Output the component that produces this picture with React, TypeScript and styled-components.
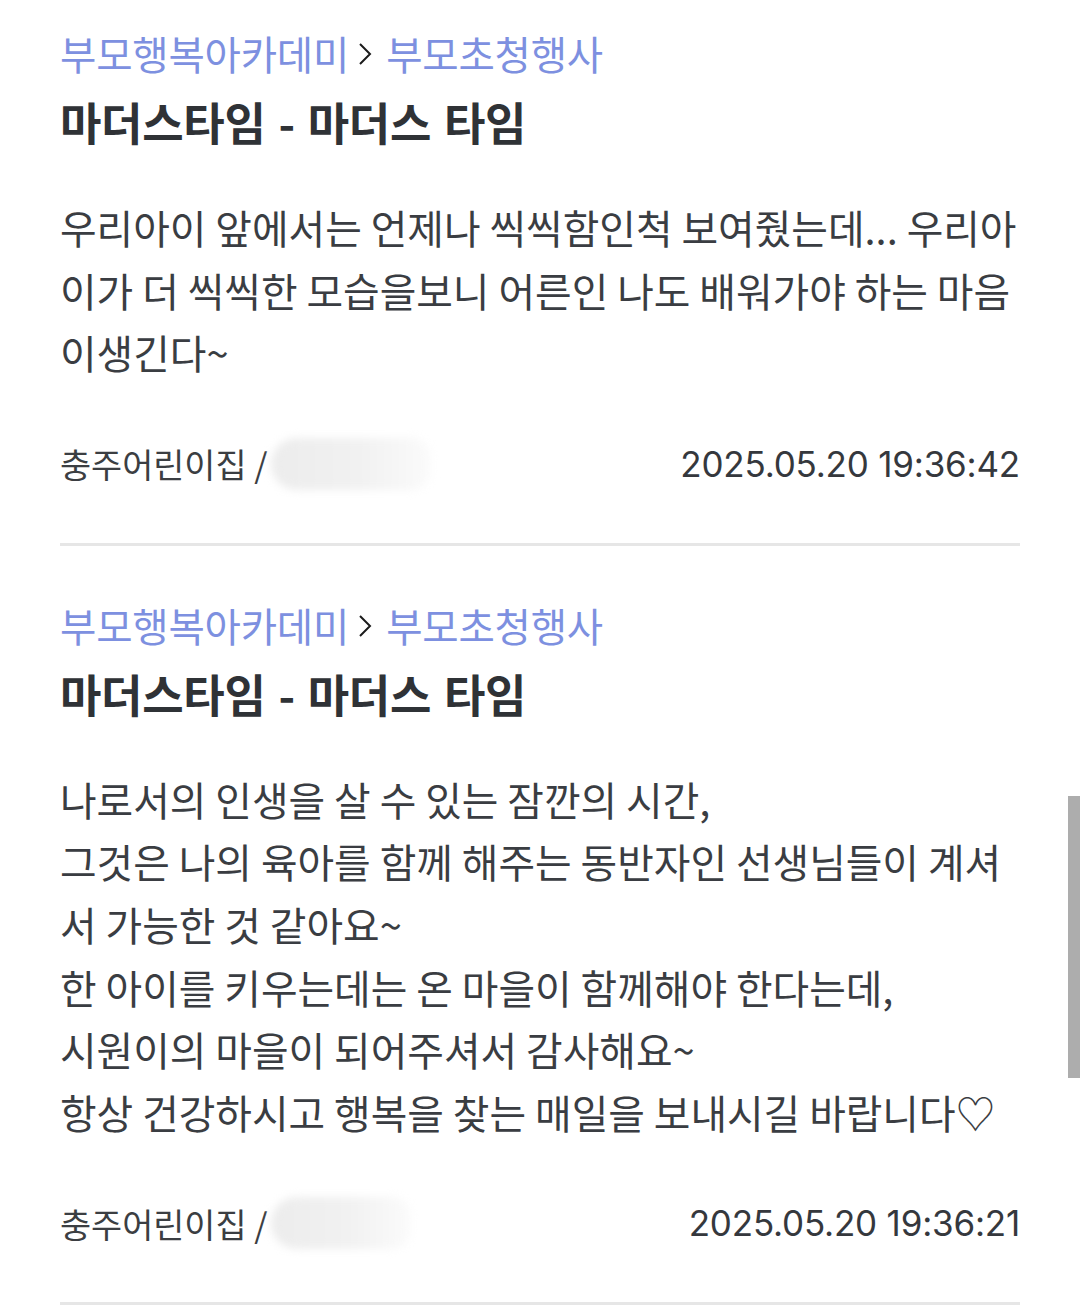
import React from 'react'
import styled, { createGlobalStyle } from 'styled-components'

const GlobalStyle = createGlobalStyle`
   html, body {
      margin: 0;
      padding: 0;
      background: #ffffff;
   }
   body {
      font-family: 'Noto Sans CJK KR', 'Noto Sans', sans-serif;
      color: #35383d;
      overflow: hidden;
   }
`

type Review = {
   category: string
   sub: string
   title: string
   lines: string[]
   author: string
   date: string
   smudge: number
}

const reviews: Review[] = [
   {
      category: '부모행복아카데미',
      sub: '부모초청행사',
      title: '마더스타임 - 마더스 타임',
      lines: [
         '우리아이 앞에서는 언제나 씩씩함인척 보여줬는데... 우리아',
         '이가 더 씩씩한 모습을보니 어른인 나도 배워가야 하는 마음',
         '이생긴다~',
      ],
      author: '충주어린이집 /',
      date: '2025.05.20 19:36:42',
      smudge: 160,
   },
   {
      category: '부모행복아카데미',
      sub: '부모초청행사',
      title: '마더스타임 - 마더스 타임',
      lines: [
         '나로서의 인생을 살 수 있는 잠깐의 시간,',
         '그것은 나의 육아를 함께 해주는 동반자인 선생님들이 계셔',
         '서 가능한 것 같아요~',
         '한 아이를 키우는데는 온 마을이 함께해야 한다는데,',
         '시원이의 마을이 되어주셔서 감사해요~',
         '항상 건강하시고 행복을 찾는 매일을 보내시길 바랍니다♡',
      ],
      author: '충주어린이집 /',
      date: '2025.05.20 19:36:21',
      smudge: 140,
   },
]

export default function App() {
   return (
      <>
         <GlobalStyle />
         <Page>
            {reviews.map((r, i) => (
               <ReviewItem key={i} review={r} />
            ))}
         </Page>
         <ScrollThumb />
      </>
   )
}

const ReviewItem = ({ review }: { review: Review }) => {
   return (
      <Item>
         <Breadcrumb>
            <Crumb>{review.category}</Crumb>
            <Chevron viewBox="0 0 14 24" width={14} height={24}>
               <polyline points="2,2 12,12 2,22" fill="none" stroke="#1b1b1b" strokeWidth={2} />
            </Chevron>
            <Crumb>{review.sub}</Crumb>
         </Breadcrumb>
         <Title>{review.title}</Title>
         <Body>
            {review.lines.map((l, i) => (
               <Line key={i}>{l}</Line>
            ))}
         </Body>
         <Footer>
            <Author>
               {review.author}
               <Smudge style={{ width: review.smudge }} />
            </Author>
            <DateText>{review.date}</DateText>
         </Footer>
      </Item>
   )
}

const Page = styled.main`
   padding: 0 60px;
`

const Item = styled.article`
   padding: 51px 0 54px;
   border-bottom: 3px solid #e6e6e6;
   &:first-child {
      padding-top: 25px;
   }
`

const Breadcrumb = styled.div`
   display: flex;
   align-items: center;
   height: 56px;
   & > svg {
      margin: 2px 14px 0 9px;
   }
`

const Crumb = styled.span`
   font-size: 39.5px;
   line-height: 56px;
   color: #7d90e0;
   letter-spacing: -0.2px;
`

const Chevron = styled.svg`
   display: block;
`

const Title = styled.h2`
   margin: 13px 0 0;
   font-size: 45px;
   line-height: 56px;
   font-weight: 700;
   color: #2f3236;
   letter-spacing: -0.3px;
   word-spacing: 3px;
`

const Body = styled.div`
   margin-top: 46px;
`

const Line = styled.p`
   margin: 0;
   font-size: 39.8px;
   line-height: 62.6px;
   color: #3a3d42;
   white-space: nowrap;
`

const Footer = styled.div`
   margin-top: 55px;
   display: flex;
   justify-content: space-between;
   align-items: center;
   height: 50px;
`

const Author = styled.span`
   display: flex;
   align-items: center;
   font-size: 33.8px;
   color: #3b3e42;
`

const Smudge = styled.span`
   display: inline-block;
   height: 52px;
   margin-left: 4px;
   border-radius: 40px 30px 30px 40px;
   background: linear-gradient(90deg, #ececec 0%, #f1f1f1 55%, #fbfbfb 100%);
   filter: blur(4px);
`

const DateText = styled.span`
   font-family: Inter, 'Noto Sans', sans-serif;
   font-size: 35px;
   color: #35383d;
   letter-spacing: -0.2px;
`

const ScrollThumb = styled.div`
   position: fixed;
   right: 0;
   top: 796px;
   width: 12px;
   height: 282px;
   background: #adadad;
`
